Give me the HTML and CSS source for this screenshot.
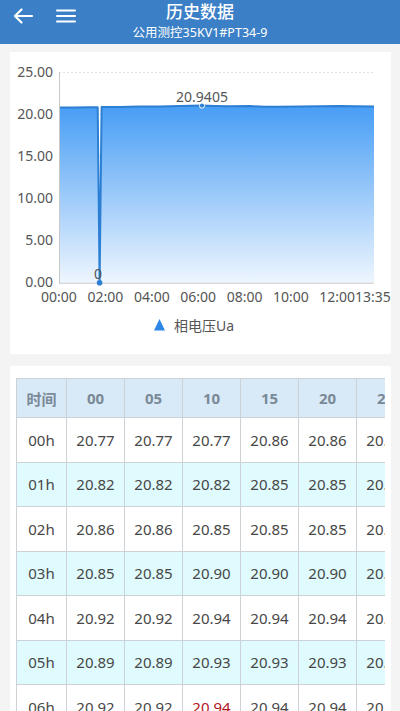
FILE: index.html
```html
<!DOCTYPE html>
<html lang="zh">
<head>
<meta charset="utf-8">
<title>历史数据</title>
<link rel="stylesheet" href="styles.css">
</head>
<body>
<div class="app">
  <header class="topbar">
    <div class="icons">
      <svg class="icon" width="22" height="16" viewBox="0 0 22 16"><path d="M20 8H3M9.5 1.5L3 8l6.5 6.5" fill="none" stroke="#fff" stroke-width="2.2" stroke-linecap="round" stroke-linejoin="round"/></svg>
      <svg class="icon menu" width="20" height="14" viewBox="0 0 20 14"><path d="M1 1.5h18M1 7h18M1 12.5h18" stroke="#fff" stroke-width="2" stroke-linecap="round"/></svg>
    </div>
    <div class="titles">
      <div class="title">历史数据</div>
      <div class="subtitle">公用测控35KV1#PT34-9</div>
    </div>
  </header>

  <section class="card chart-card">
    <svg class="chart" width="381" height="302" viewBox="10 52 381 302">
      <defs>
        <linearGradient id="fillg" x1="0" y1="0" x2="0" y2="1">
          <stop offset="0" stop-color="#479df5"/>
          <stop offset="1" stop-color="#eef6fe"/>
        </linearGradient>
      </defs>
      <g class="grid">
        <line x1="59" y1="72.5" x2="374" y2="72.5"/>
        <line x1="59" y1="114.5" x2="374" y2="114.5"/>
        <line x1="59" y1="156.5" x2="374" y2="156.5"/>
        <line x1="59" y1="198.5" x2="374" y2="198.5"/>
        <line x1="59" y1="240.5" x2="374" y2="240.5"/>
      </g>
      <path d="M59,107.6 L75,107.4 L90,107.2 L97.7,107.3 L99.6,282.7 L101.6,107 L120,106.9 L140,106.6 L160,106.4 L180,106.1 L202,105.6 L215,105.9 L230,106.3 L250,106.1 L265,106.8 L280,106.7 L300,106.4 L320,106.2 L340,106.0 L355,106.3 L374,106.6 L374,282.7 L59,282.7 Z" fill="url(#fillg)"/>
      <path d="M59,107.6 L75,107.4 L90,107.2 L97.7,107.3 L99.6,282.7 L101.6,107 L120,106.9 L140,106.6 L160,106.4 L180,106.1 L202,105.6 L215,105.9 L230,106.3 L250,106.1 L265,106.8 L280,106.7 L300,106.4 L320,106.2 L340,106.0 L355,106.3 L374,106.6" fill="none" stroke="#2c7fd3" stroke-width="2" stroke-linejoin="round"/>
      <line class="axis" x1="59.5" y1="72" x2="59.5" y2="283"/>
      <line class="axis" x1="59" y1="283.2" x2="374" y2="283.2"/>
      <circle cx="202" cy="105.6" r="2.6" fill="#2c7fd3" stroke="#fff" stroke-width="1"/>
      <circle cx="99.6" cy="282.7" r="2.8" fill="#2c7fd3"/>
      <g class="ylab">
        <text x="53" y="77">25.00</text>
        <text x="53" y="119">20.00</text>
        <text x="53" y="161">15.00</text>
        <text x="53" y="203">10.00</text>
        <text x="53" y="245">5.00</text>
        <text x="53" y="287">0.00</text>
      </g>
      <g class="xlab">
        <text x="59" y="302">00:00</text>
        <text x="105.4" y="302">02:00</text>
        <text x="151.8" y="302">04:00</text>
        <text x="198.2" y="302">06:00</text>
        <text x="244.6" y="302">08:00</text>
        <text x="291" y="302">10:00</text>
        <text x="337.2" y="302">12:00</text>
        <text x="373" y="302">13:35</text>
      </g>
      <g class="vlab">
        <text x="202" y="102">20.9405</text>
        <text x="98" y="279">0</text>
      </g>
      <path d="M159.5,319 L165,330.5 L154,330.5 Z" fill="#2c87e6"/>
      <text class="legend" x="174" y="331">相电压Ua</text>
    </svg>
  </section>

  <section class="card table-card">
    <div class="table-wrap">
      <table class="data">
        <thead>
          <tr><th class="c-time">时间</th><th>00</th><th>05</th><th>10</th><th>15</th><th>20</th><th>25</th></tr>
        </thead>
        <tbody>
          <tr><td>00h</td><td>20.77</td><td>20.77</td><td>20.77</td><td>20.86</td><td>20.86</td><td>20.86</td></tr>
          <tr class="alt"><td>01h</td><td>20.82</td><td>20.82</td><td>20.82</td><td>20.85</td><td>20.85</td><td>20.85</td></tr>
          <tr><td>02h</td><td>20.86</td><td>20.86</td><td>20.85</td><td>20.85</td><td>20.85</td><td>20.85</td></tr>
          <tr class="alt"><td>03h</td><td>20.85</td><td>20.85</td><td>20.90</td><td>20.90</td><td>20.90</td><td>20.90</td></tr>
          <tr><td>04h</td><td>20.92</td><td>20.92</td><td>20.94</td><td>20.94</td><td>20.94</td><td>20.94</td></tr>
          <tr class="alt"><td>05h</td><td>20.89</td><td>20.89</td><td>20.93</td><td>20.93</td><td>20.93</td><td>20.93</td></tr>
          <tr><td>06h</td><td>20.92</td><td>20.92</td><td class="hi">20.94</td><td>20.94</td><td>20.94</td><td>20.94</td></tr>
          <tr class="alt"><td>07h</td><td>20.91</td><td>20.91</td><td>20.92</td><td>20.92</td><td>20.92</td><td>20.92</td></tr>
        </tbody>
      </table>
    </div>
  </section>
</div>
</body>
</html>
```
FILE: styles.css
```css
html, body {
  margin: 0;
  padding: 0;
}
body {
  background: #f4f4f4;
  font-family: "Noto Sans", "Noto Sans CJK SC", sans-serif;
  color: #444;
}
.app {
  height: 100vh;
  overflow: hidden;
  display: flex;
  flex-direction: column;
}
.topbar {
  position: relative;
  height: 44px;
  flex: none;
  background: #3b80c6;
  color: #fff;
}
.icons {
  position: absolute;
  left: 12px;
  top: 8px;
  display: flex;
  align-items: center;
  gap: 22px;
}
.icon {
  display: block;
}
.titles {
  display: flex;
  flex-direction: column;
  align-items: center;
  padding-top: 1px;
}
.title {
  font-size: 17px;
  line-height: 22px;
  font-weight: 500;
}
.subtitle {
  font-size: 12.5px;
  line-height: 20px;
}
.card {
  background: #fff;
  margin: 0 9px 0 10px;
}
.chart-card {
  margin-top: 8px;
  height: 302px;
  flex: none;
}
.chart {
  display: block;
}
.grid line {
  stroke: #e2e2e2;
  stroke-width: 1;
  stroke-dasharray: 2 2;
}
.axis {
  stroke: #c8c8c8;
  stroke-width: 1;
}
.ylab text {
  font-size: 14px;
  fill: #555;
  text-anchor: end;
}
.xlab text {
  font-size: 14px;
  fill: #555;
  text-anchor: middle;
}
.vlab text {
  font-size: 14px;
  fill: #555;
  text-anchor: middle;
}
.legend {
  font-size: 14px;
  fill: #555;
}
.table-card {
  margin-top: 12px;
  flex: 1;
  padding: 12px 6px 0 6px;
  overflow: hidden;
}
.table-wrap {
  width: 369px;
  overflow: hidden;
}
.data {
  border-collapse: collapse;
  table-layout: fixed;
  width: 399px;
}
.data th, .data td {
  border: 1px solid #cdd2d6;
  text-align: center;
  padding: 0;
  width: 57px;
  white-space: nowrap;
  overflow: hidden;
}
.data th.c-time {
  width: 49px;
}
.data th {
  background: #d8e9f7;
  color: #7a8997;
  font-weight: 700;
  font-size: 15px;
  height: 38px;
}
.data td {
  font-size: 15px;
  color: #474747;
  height: 43.5px;
  background: #fff;
}
.data tr.alt td {
  background: #dffbfd;
}
.data td.hi {
  color: #b3141c;
}
```
